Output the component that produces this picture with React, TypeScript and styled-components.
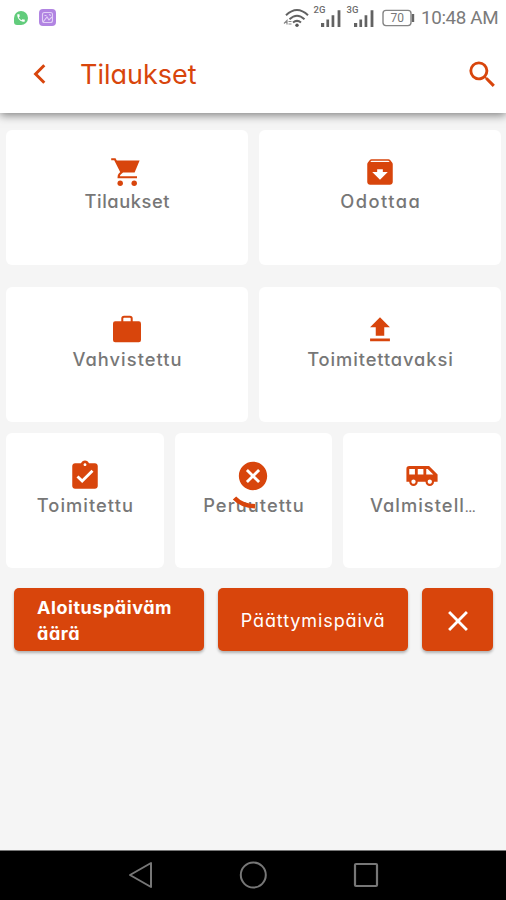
import React from 'react';
import styled, { createGlobalStyle } from 'styled-components';
import {
  MdArchive, MdUpload, MdAssignmentTurnedIn, MdCancel, MdAirportShuttle, MdSearch, MdClose, MdPhone,
} from 'react-icons/md';

const orange = '#d8450c';

const GlobalStyle = createGlobalStyle`
  *, *::before, *::after { box-sizing: border-box; }
  body { margin: 0; background: #f5f5f5; font-family: Inter, "Open Sans", sans-serif; font-feature-settings: "cv11"; }
`;

const Screen = styled.div`
  width: 506px;
  height: 900px;
  display: flex;
  flex-direction: column;
  background: #f5f5f5;
  overflow: hidden;
`;

const Header = styled.header`
  height: 113px;
  flex: none;
  background: #fff;
  box-shadow: 0 2px 9px rgba(0, 0, 0, 0.5);
`;

const StatusBar = styled.div`
  height: 36px;
  display: flex;
  align-items: center;
  padding: 0 8px 1px 14px;
`;

const WhatsBadge = styled.span`
  width: 14px;
  height: 14px;
  display: flex;
  align-items: center;
  justify-content: center;
  border-radius: 50% 50% 50% 3px;
  background: #62cc7c;
  color: #fff;
`;

const AppBadge = styled.span`
  width: 17px;
  height: 17px;
  margin-left: 11px;
  border-radius: 4px;
  background: #b184e2;
  display: flex;
`;

const StatusIcons = styled.div`
  margin-left: auto;
  display: flex;
  align-items: center;
`;

const SignalPair = styled.div`
  display: flex;
  gap: 3.5px;
  margin: 0 6px 0 3.5px;
`;

const Clock = styled.span`
  margin-left: 6px;
  width: 77px;
  font: 400 18.8px/36px Roboto, sans-serif;
  letter-spacing: -0.35px;
  white-space: nowrap;
  color: #7b7b7b;
`;

const Toolbar = styled.div`
  height: 77px;
  display: flex;
  align-items: center;
  padding: 0 6px 1px 30px;
  color: ${orange};
`;

const Title = styled.h1`
  margin: 2px auto 0 30px;
  font-size: 27px;
  line-height: 34px;
  font-weight: 400;
`;

const CardRow = styled.section<{ $columns: number; $top: number }>`
  display: grid;
  flex: none;
  grid-template-columns: repeat(${(p) => p.$columns}, 1fr);
  gap: 11px;
  height: 135px;
  margin: ${(p) => p.$top}px 5px 0 6px;
`;

const Card = styled.div<{ $pad?: number }>`
  position: relative;
  min-width: 0;
  display: flex;
  flex-direction: column;
  align-items: center;
  padding-top: ${(p) => p.$pad ?? 26}px;
  background: #fff;
  border-radius: 6px;
  color: ${orange};
  svg { flex: none; }
`;

const Label = styled.span<{ $spacing: number }>`
  font-size: 18.3px;
  line-height: 24px;
  font-weight: 500;
  color: #777;
  white-space: nowrap;
  letter-spacing: ${(p) => p.$spacing}px;
  margin-right: ${(p) => -p.$spacing}px;
`;

const Ellipsis = styled.span`
  font-size: 10.5px;
  font-weight: 700;
  letter-spacing: 0;
`;

const Swoosh = styled.svg`
  position: absolute;
  left: 57px;
  top: 60px;
`;

const Actions = styled.div`
  display: grid;
  flex: none;
  grid-template-columns: 190px 190px 71px;
  gap: 14px;
  height: 63px;
  margin: 20px 13px 0 14px;
`;

const Button = styled.button<{ $bold?: boolean; $spacing?: number }>`
  display: flex;
  align-items: center;
  justify-content: ${(p) => (p.$bold ? 'flex-start' : 'center')};
  padding: 2px 0 0 ${(p) => (p.$bold ? 23 : 0)}px;
  border: 0;
  border-radius: 5px;
  background: ${orange};
  color: #fff;
  font-family: inherit;
  font-feature-settings: "cv11";
  font-size: 18px;
  line-height: 25.5px;
  text-align: left;
  font-weight: ${(p) => (p.$bold ? 700 : 400)};
  letter-spacing: ${(p) => p.$spacing ?? 0}px;
  white-space: nowrap;
  box-shadow: 0 2px 3px rgba(0, 0, 0, 0.28);
`;

const NavBar = styled.nav`
  height: 50px;
  flex: none;
  margin-top: auto;
  display: flex;
  align-items: center;
  justify-content: center;
  gap: 84px;
  padding-bottom: 1px;
  background: #000;
  border-top: 1px solid #777;
`;

function PhotoGlyph() {
  return (
    <svg width="17" height="17" viewBox="0 0 17 17" fill="none" stroke="#e2d0f6" strokeWidth="1.1">
      <rect x="3.5" y="3.5" width="10" height="10" rx="2" />
      <path d="M4 13l4-5 2 3 3-3M5.5 6.5h2M10 5.5l2 1" />
    </svg>
  );
}

function Cart() {
  return (
    <svg width="34" height="34" viewBox="0 0 34 34" fill="currentColor">
      <path d="M5.8 5.4H29.6L24.6 17.6H11.6z" />
      <path d="M1.2 4.2H4.9L11.6 17.4Q8.6 19.2 8.6 22.2H27" fill="none" stroke="currentColor" strokeWidth="2.1" />
      <circle cx="10.2" cy="28.2" r="2.7" />
      <circle cx="24.2" cy="28.2" r="2.7" />
    </svg>
  );
}

function Briefcase() {
  return (
    <svg width="34" height="34" viewBox="0 0 34 34">
      <rect x="3" y="8.2" width="28" height="21" rx="2.2" fill="currentColor" />
      <path d="M12.3 9V5.6q0-1.8 1.8-1.8h5.8q1.8 0 1.8 1.8V9" fill="none" stroke="currentColor" strokeWidth="2" />
    </svg>
  );
}

function Wifi() {
  return (
    <svg width="27" height="22" viewBox="0 0 27 22" fill="none" stroke="#626262" strokeWidth="2">
      <path d="M4 8.2Q15 -2.2 26 8.2M7.5 12.2Q15 5.2 22.5 12.2M11 15.6Q15 12.2 19 15.6" />
      <circle cx="15" cy="18.3" r="1.7" fill="#555" stroke="none" />
      <path d="M2 16.5l3-3v4M6.5 14.5h3M6.5 17h3" strokeWidth="1.2" stroke="#888" />
    </svg>
  );
}

function Signal({ label }: { label: string }) {
  return (
    <svg width="30" height="26" viewBox="0 0 30 26">
      <text x="0.5" y="8.4" fontFamily="Roboto" fontSize="9.5" fontWeight="500" fill="#6c6c6c">{label}</text>
      <path d="M8 18h3.2v4H8zM13.4 14.5h2.7V22h-2.7zM18.6 10.3h2.7V22h-2.7zM24.6 5.2h2.8V22h-2.8z" fill="#626262" />
    </svg>
  );
}

function Battery() {
  return (
    <svg width="33" height="18" viewBox="0 0 33 18">
      <rect x="1" y="1.4" width="28" height="15.2" rx="3" fill="none" stroke="#858585" strokeWidth="1.4" />
      <path d="M31 5v8" stroke="#666" strokeWidth="2.4" />
      <text x="15.2" y="13.3" textAnchor="middle" fontFamily="Roboto" fontSize="12" fill="#777">70</text>
    </svg>
  );
}

export default function App() {
  return (
    <Screen>
      <GlobalStyle />
      <Header>
        <StatusBar>
          <WhatsBadge><MdPhone size={10} /></WhatsBadge>
          <AppBadge><PhotoGlyph /></AppBadge>
          <StatusIcons>
            <Wifi />
            <SignalPair>
              <Signal label="2G" />
              <Signal label="3G" />
            </SignalPair>
            <Battery />
            <Clock>10:48 AM</Clock>
          </StatusIcons>
        </StatusBar>
        <Toolbar>
          <svg width="20" height="24" viewBox="0 0 20 24" fill="none" stroke="currentColor" strokeWidth="3">
            <path d="M14.3 3.3L5.6 12l8.7 8.7" />
          </svg>
          <Title>Tilaukset</Title>
          <MdSearch size={35} />
        </Toolbar>
      </Header>
      <CardRow $columns={2} $top={17}>
        <Card $pad={25}><Cart /><Label $spacing={0.55}>Tilaukset</Label></Card>
        <Card $pad={25}><MdArchive size={34} /><Label $spacing={1.45}>Odottaa</Label></Card>
      </CardRow>
      <CardRow $columns={2} $top={22}>
        <Card><Briefcase /><Label $spacing={1.05}>Vahvistettu</Label></Card>
        <Card><MdUpload size={34} /><Label $spacing={0.9}>Toimitettavaksi</Label></Card>
      </CardRow>
      <CardRow $columns={3} $top={11}>
        <Card><MdAssignmentTurnedIn size={34} /><Label $spacing={1.05}>Toimitettu</Label></Card>
        <Card>
          <MdCancel size={34} />
          <Label $spacing={1.05}>Peruutettu</Label>
          <Swoosh width="28" height="20" viewBox="0 0 28 20" fill="none" stroke={orange} strokeWidth="4.6">
            <path d="M2.5 5Q10 13 23 13.2" />
          </Swoosh>
        </Card>
        <Card><MdAirportShuttle size={34} /><Label $spacing={1.05}>Valmistell<Ellipsis>…</Ellipsis></Label></Card>
      </CardRow>
      <Actions>
        <Button $bold $spacing={0.55}>Aloituspäiväm<br />äärä</Button>
        <Button $spacing={0.9}>Päättymispäivä</Button>
        <Button><MdClose size={34} /></Button>
      </Actions>
      <NavBar>
        <svg width="28" height="30" viewBox="0 0 28 30" fill="none" stroke="#777" strokeWidth="2" strokeLinejoin="round">
          <path d="M25 3v24L4 15z" />
        </svg>
        <svg width="30" height="30" viewBox="0 0 30 30" fill="none" stroke="#777" strokeWidth="2">
          <circle cx="15.3" cy="15" r="12.5" />
        </svg>
        <svg width="28" height="28" viewBox="0 0 28 28" fill="none" stroke="#777" strokeWidth="2.2">
          <rect x="3" y="3" width="22" height="22" rx="1" />
        </svg>
      </NavBar>
    </Screen>
  );
}
